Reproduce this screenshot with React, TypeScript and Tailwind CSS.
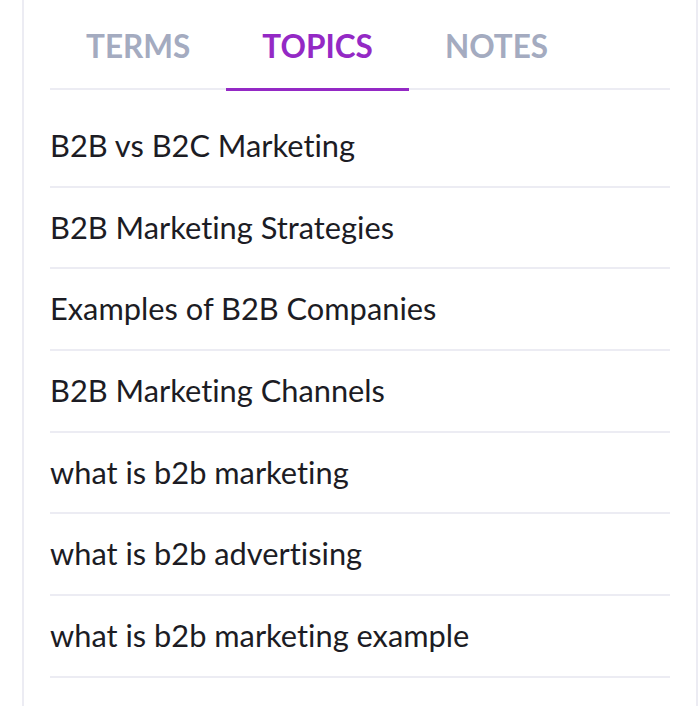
import React from "react";

const items = [
  "B2B vs B2C Marketing",
  "B2B Marketing Strategies",
  "Examples of B2B Companies",
  "B2B Marketing Channels",
  "what is b2b marketing",
  "what is b2b advertising",
  "what is b2b marketing example",
  "b2b marketing strategies",
];

export default function App() {
  return (
    <div className="w-[698px] h-[706px] overflow-hidden bg-white [font-variant-ligatures:none]" style={{ fontFamily: "Lato, 'Noto Sans', sans-serif" }}>
      <div className="ml-[22px] h-full border-l-2 border-r-2 border-[#ececf3] px-[26px]">
        <div className="flex h-[90px] border-b-2 border-[#ececf3]">
          <div className="px-9 pt-[28px] text-[31.5px] leading-[36px] font-bold text-[#a4abc0] whitespace-nowrap">TERMS</div>
          <div className="px-9 pt-[28px] text-[31.5px] leading-[36px] font-bold text-[#9429c5] border-b-[3px] border-[#9429c5] -mb-[2px] h-[91px] whitespace-nowrap">TOPICS</div>
          <div className="px-9 pt-[28px] text-[31.5px] leading-[36px] font-bold text-[#a4abc0] whitespace-nowrap">NOTES</div>
        </div>
        <div className="mt-4 flex flex-col">
          {items.map((t) => (
            <div key={t} className="h-[81.7px] shrink-0 flex items-center border-b-2 border-[#ececf3] text-[30.8px] leading-[36px] text-[#1c1c24] whitespace-nowrap">
              {t}
            </div>
          ))}
        </div>
      </div>
    </div>
  );
}
